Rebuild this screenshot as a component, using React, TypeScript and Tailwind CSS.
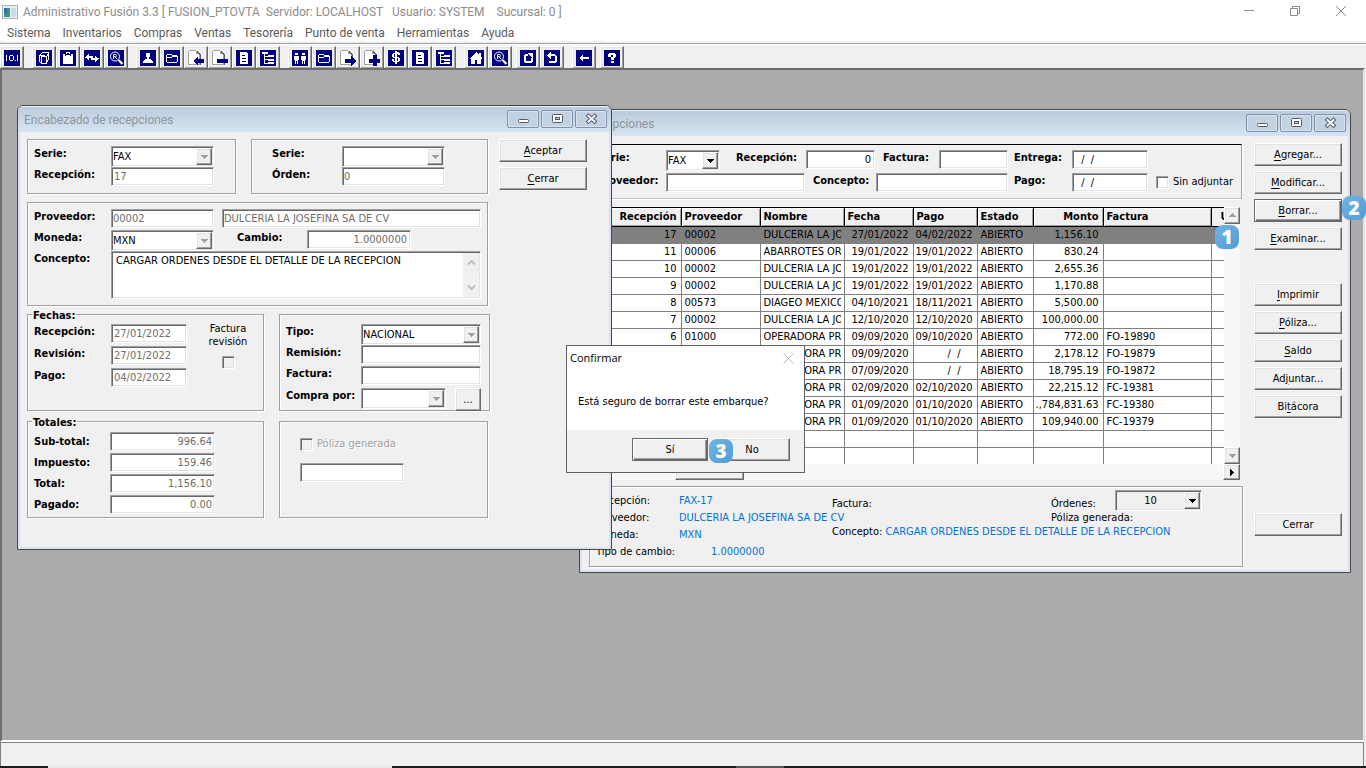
import React from "react";

const sunken =
  "border border-t-[#a0a0a0] border-l-[#a0a0a0] border-r-white border-b-white shadow-[inset_1px_1px_0_#696969,inset_-1px_-1px_0_#e3e3e3]";
const raised =
  "border border-t-white border-l-white border-r-[#696969] border-b-[#696969] shadow-[inset_-1px_-1px_0_#a0a0a0,inset_1px_1px_0_#e3e3e3] bg-[#f0f0f0]";
const etched = "border border-[#a0a0a0] shadow-[1px_1px_0_#fff,inset_1px_1px_0_#fff]";

function Field({
  id,
  value = "",
  className = "",
  label,
  disabled = true,
}: {
  id?: string;
  value?: string;
  className?: string;
  label?: string;
  disabled?: boolean;
}) {
  return (
    <input
      id={id}
      type="text"
      aria-label={label}
      defaultValue={value}
      disabled={disabled}
      className={`block h-[19px] min-w-0 rounded-none bg-white px-[3px] ${sunken} ${
        disabled ? "text-[#6d6d6d]" : "text-black"
      } ${className}`}
    />
  );
}

function Arrow({ dir = "down", color = "#000" }: { dir?: "down" | "up" | "right"; color?: string }) {
  const d = {
    down: "M1 3h7v1H7v1H6v1H5v1H4V6H3V5H2V4H1z",
    up: "M4 2h1v1h1v1h1v1h1v1H1V5h1V4h1V3h1z",
    right: "M3 1h1v1h1v1h1v1h1v1H6v1H5v1H4v1H3z",
  }[dir];
  return (
    <svg width="9" height="9" viewBox="0 0 9 9" shapeRendering="crispEdges" aria-hidden="true">
      <path d={d} fill={color} />
    </svg>
  );
}

function Combo({
  id,
  value = "",
  className = "",
  bg = "bg-white",
  align = "",
  disabled = true,
}: {
  id?: string;
  value?: string;
  className?: string;
  bg?: string;
  align?: string;
  disabled?: boolean;
}) {
  return (
    <div className={`flex h-[21px] items-stretch p-px ${bg} ${sunken} ${className}`}>
      <select
        id={id}
        aria-label={id ? undefined : "Opciones"}
        defaultValue={value}
        disabled={disabled}
        className={`min-w-0 flex-1 appearance-none bg-transparent text-black opacity-100 outline-none ${align}`}
      >
        <option value={value}>{value}</option>
      </select>
      <span className={`pointer-events-none flex w-4 items-center justify-center ${raised}`}>
        <Arrow color={disabled ? "#a0a0a0" : "#000"} />
      </span>
    </div>
  );
}

function Label({
  htmlFor,
  children,
  className = "",
}: {
  htmlFor?: string;
  children: React.ReactNode;
  className?: string;
}) {
  return (
    <label htmlFor={htmlFor} className={`block font-bold whitespace-nowrap ${className}`}>
      {children}
    </label>
  );
}

function PushButton({
  text,
  accel = -1,
  focus = false,
  className = "",
}: {
  text: string;
  accel?: number;
  focus?: boolean;
  className?: string;
}) {
  return (
    <button
      type="button"
      className={`flex h-[23px] items-center justify-center ${
        focus
          ? "border border-[#696969] bg-[#f0f0f0] shadow-[inset_1px_1px_0_#fff,inset_-1px_-1px_0_#696969,inset_-2px_-2px_0_#a0a0a0]"
          : raised
      } ${className}`}
    >
      <span>
        {accel < 0 ? (
          text
        ) : (
          <>
            {text.slice(0, accel)}
            <span className="underline underline-offset-2">{text[accel]}</span>
            {text.slice(accel + 1)}
          </>
        )}
      </span>
    </button>
  );
}

function CaptionButtons() {
  const cls =
    "flex h-[18px] w-8 items-center justify-center rounded-[2px] border border-[#8290ab] bg-[#c3d2e3] shadow-[inset_0_0_0_1px_#d9e4f0]";
  return (
    <div className="flex gap-0.5 pb-0.5">
      <button type="button" aria-label="Minimizar" className={cls}>
        <svg width="13" height="12" viewBox="0 0 13 12">
          <rect x="1.5" y="6.5" width="10" height="3" rx="1" fill="#fff" stroke="#535666" />
        </svg>
      </button>
      <button type="button" aria-label="Maximizar" className={cls}>
        <svg width="13" height="12" viewBox="0 0 13 12">
          <rect x="1.5" y="1.5" width="10" height="8" rx="1" fill="#fff" stroke="#535666" />
          <rect x="4.5" y="4.5" width="4" height="2" fill="#c3d2e3" stroke="#535666" />
        </svg>
      </button>
      <button type="button" aria-label="Cerrar ventana" className={cls}>
        <svg width="13" height="12" viewBox="0 0 13 12">
          <path d="M3.500 3l6 5.500M9.500 3l-6 5.500" stroke="#535666" strokeWidth="4" strokeLinecap="square" />
          <path d="M3.500 3l6 5.500M9.500 3l-6 5.500" stroke="#fff" strokeWidth="2" strokeLinecap="square" />
        </svg>
      </button>
    </div>
  );
}

function Win({
  title,
  className,
  children,
}: {
  title: string;
  className: string;
  children: React.ReactNode;
}) {
  return (
    <section
      aria-label={title}
      className={`absolute flex flex-col overflow-hidden rounded-t-md border border-[#474747] bg-[#d7e3f0] ${className}`}
    >
      <header className="flex h-[26px] items-center justify-between border-t border-[#e8f0f8] bg-linear-to-b from-[#bccbdd] to-[#d7e4f1] pr-1 pl-1.5">
        <h2 className="font-['Roboto',sans-serif] text-[12px] text-[#8f959c]">{title}</h2>
        <CaptionButtons />
      </header>
      <div className="mx-0.5 mb-0.5 flex flex-1 bg-[#f0f0f0] pl-[7px]">{children}</div>
    </section>
  );
}

function Tile({ children }: { children: React.ReactNode }) {
  return (
    <svg width="16" height="16" viewBox="0 0 16 16" shapeRendering="crispEdges" aria-hidden="true">
      <rect width="16" height="16" fill="#000080" />
      {children}
    </svg>
  );
}

const W = "#fff";
function Page({ children }: { children: React.ReactNode }) {
  return (
    <svg width="16" height="16" viewBox="0 0 16 16" shapeRendering="crispEdges" aria-hidden="true">
      <path d="M1 1h8l3 3v11H1z" fill="#fff" />
      <path d="M1 0h7v1H1zM0 1h1v14H0zM8 1h1v2h2v1H8zM11 4h1v11H1v-1h10z" fill="#a0a0a0" />
      <path d="M9 1h1v1h1v1h1v1h1v11h-1V5h-1V4h-1V3H9z" fill="#606060" />
      {children}
    </svg>
  );
}

const icons: Record<string, React.ReactNode> = {
  num: (
    <Tile>
      <path d="M2 5h1v6H2zM6 5h3v1H6zM6 10h3v1H6zM5 6h1v4H5zM9 6h1v4H9zM11 10h1v1h-1zM13 5h1v6h-1z" fill={W} />
    </Tile>
  ),
  cube: (
    <Tile>
      <path d="M3.500 5.500l3-3h6v7l-3 4h-4l-2-2zM3.500 5.500h2l3 0M5.500 13.500v-7h5v7h-5M10.500 6.500l2-3" fill="none" stroke={W} />
    </Tile>
  ),
  clip: (
    <Tile>
      <path d="M3 4h3V2h4v2h3v10H3z" fill={W} />
      <path d="M5 4h6v2H5zM7 3h2v1H7z" fill="#000080" />
      <path d="M6 5h4v1H6z" fill={W} />
    </Tile>
  ),
  swap: (
    <Tile>
      <path d="M1 7h1V6h1V5h1V4h1v2h4v2H5v2H4V9H3V8H1zM15 9h-1v1h-1v1h-1v1h-1v-2H7V8h4V6h1v1h1v1h2z" fill={W} />
    </Tile>
  ),
  find: (
    <Tile>
      <g shapeRendering="auto">
        <circle cx="7" cy="6.500" r="4.500" fill="none" stroke={W} />
        <path d="M5.500 9V4.500h2a1 1 0 010 2.200h-2M7 6.700L9 9" fill="none" stroke={W} />
        <path d="M10.500 10l4 4" stroke={W} strokeWidth="2.200" />
      </g>
    </Tile>
  ),
  user: (
    <Tile>
      <path d="M6 3h4v4H9v2h2v1h1v1h1v2H3v-2h1v-1h1V9h2V7H6z" fill={W} />
    </Tile>
  ),
  folder: (
    <Tile>
      <path d="M2.500 5.500l1-1h4l1 1h4l1 1v5l-1 1h-9l-1-1zM2.500 7.500h5l1-1h5" fill="none" stroke={W} />
    </Tile>
  ),
  pageLeft: (
    <Page>
      <path d="M5 11l5-5v3h6v4h-6v3z" fill="#000080" />
    </Page>
  ),
  pageMinus: (
    <Page>
      <path d="M5 9h11v4H5z" fill="#000080" />
    </Page>
  ),
  pageRight: (
    <Page>
      <path d="M16 11l-5-5v3H5v4h6v3z" fill="#000080" />
    </Page>
  ),
  pagePlus: (
    <Page>
      <path d="M5 9h4V5h4v4h3v4h-3v3H9v-3H5z" fill="#000080" />
    </Page>
  ),
  doc: (
    <Tile>
      <path d="M4 2h6l2 2v10H4z" fill={W} />
      <path d="M6 5h3v1H6zM6 8h4v1H6zM6 11h4v1H6z" fill="#000080" />
    </Tile>
  ),
  tree: (
    <Tile>
      <path d="M2 2h6v2H2zM4 4h1v9h3v1H4zM5 6h3v1H5zM5 9h3v1H5zM8 5h6v2H8zM8 9h6v2H8zM8 12h6v2H8z" fill={W} />
    </Tile>
  ),
  people: (
    <Tile>
      <path d="M3 3h3v2H3zM2 6h5v4H6v4H5v-3H4v3H3v-4H2zM10 3h3v2h-3zM9 6h5v4h-1v4h-1v-3h-1v3h-1v-4H9z" fill={W} />
    </Tile>
  ),
  money: (
    <Tile>
      <path d="M7 1h2v1h2v1h1v2h-2V4H9v3h2v1h1v3h-1v1H9v2H7v-2H5v-1H4V9h2v2h1V8H5V7H4V4h1V3h2zM6 4v3h1V4zM9 8v3h1V8z" fill={W} fillRule="evenodd" />
    </Tile>
  ),
  home: (
    <Tile>
      <path d="M8 2l6 6v1h-1v5H9v-4H7v4H3V9H2V8z" fill={W} />
      <path d="M11 3h2v4h-2z" fill={W} />
    </Tile>
  ),
  redo: (
    <Tile>
      <path d="M5 4h3v2H6v5h5V8h2v4h-1v1H5v-1H4V5h1zM8 3h5v5h-1V7h-1V6h-1V5H9V4H8z" fill={W} />
    </Tile>
  ),
  undo: (
    <Tile>
      <path d="M3 5h1V4h1V3h1V2h1v2h4v1h1v1h1v6h-1v1H5v-2h6V6H7v3H6V8H5V7H4V6H3z" fill={W} />
    </Tile>
  ),
  back: (
    <Tile>
      <path d="M3 8l4-4v3h6v2H7v3z" fill={W} />
    </Tile>
  ),
  help: (
    <Tile>
      <path d="M5 3h6v1h1v3h-1v1h-1v2H7V7h2V5H7v2H4V4h1zM7 11h3v2H7z" fill={W} />
    </Tile>
  ),
};

const toolbar: { gap: string; items: [string, string][] }[] = [
  { gap: "", items: [["num", "Contador"]] },
  { gap: "ml-2", items: [["cube", "Productos"], ["clip", "Portapapeles"], ["swap", "Traspasos"], ["find", "Buscar"]] },
  { gap: "ml-2", items: [["user", "Proveedores"], ["folder", "Carpeta"], ["pageLeft", "Entrada"], ["pageMinus", "Quitar"], ["doc", "Documento"], ["tree", "Árbol"]] },
  { gap: "ml-2", items: [["people", "Clientes"], ["folder", "Carpeta"], ["pageRight", "Salida"], ["pagePlus", "Añadir"], ["money", "Caja"], ["doc", "Documento"], ["tree", "Árbol"]] },
  { gap: "ml-2", items: [["home", "Inicio"], ["find", "Buscar"]] },
  { gap: "ml-1", items: [["redo", "Rehacer"], ["undo", "Deshacer"]] },
  { gap: "ml-2", items: [["back", "Volver"]] },
  { gap: "ml-1", items: [["help", "Ayuda"]] },
];

const menu = ["Sistema", "Inventarios", "Compras", "Ventas", "Tesorería", "Punto de venta", "Herramientas", "Ayuda"];

const rows = [
  ["17", "00002", "DULCERIA LA JOSEFINA", "27/01/2022", "04/02/2022", "ABIERTO", "1,156.10", ""],
  ["11", "00006", "ABARROTES ORIENTE", "19/01/2022", "19/01/2022", "ABIERTO", "830.24", ""],
  ["10", "00002", "DULCERIA LA JOSEFINA", "19/01/2022", "19/01/2022", "ABIERTO", "2,655.36", ""],
  ["9", "00002", "DULCERIA LA JOSEFINA", "19/01/2022", "19/01/2022", "ABIERTO", "1,170.88", ""],
  ["8", "00573", "DIAGEO MEXICO", "04/10/2021", "18/11/2021", "ABIERTO", "5,500.00", ""],
  ["7", "00002", "DULCERIA LA JOSEFINA", "12/10/2020", "12/10/2020", "ABIERTO", "100,000.00", ""],
  ["6", "01000", "OPERADORA PRIMERA", "09/09/2020", "09/10/2020", "ABIERTO", "772.00", "FO-19890"],
  ["5", "01000", "OPERADORA PRIMERA", "09/09/2020", "/  /", "ABIERTO", "2,178.12", "FO-19879"],
  ["4", "01000", "OPERADORA PRIMERA", "07/09/2020", "/  /", "ABIERTO", "18,795.19", "FO-19872"],
  ["3", "01000", "OPERADORA PRIMERA", "02/09/2020", "02/10/2020", "ABIERTO", "22,215.12", "FC-19381"],
  ["2", "01000", "OPERADORA PRIMERA", "01/09/2020", "01/10/2020", "ABIERTO", ".,784,831.63", "FC-19380"],
  ["1", "01000", "OPERADORA PRIMERA", "01/09/2020", "01/10/2020", "ABIERTO", "109,940.00", "FC-19379"],
  ["", "", "", "", "", "", "", ""],
  ["", "", "", "", "", "", "", ""],
];
const heads = ["Recepción", "Proveedor", "Nombre", "Fecha", "Pago", "Estado", "Monto", "Factura"];
const colWidths = ["w-[92px]", "w-[79px]", "w-[84px]", "w-[69px]", "w-[64px]", "w-[56px]", "w-[70px]", "w-[108px]", "w-[13px]"];
const alignOf = (i: number) =>
  i === 0 || i === 3 || i === 4 || i === 6 ? "text-right" : "text-left pl-[3px]";

const check = "block h-[13px] w-[13px] shrink-0 appearance-none rounded-none";
const dither =
  "bg-[repeating-conic-gradient(#fff_0_25%,#f0f0f0_0_50%)] bg-size-[2px_2px]";

function Grid() {
  return (
    <div className="flex h-[273px] w-[651px] flex-col">
      <div className="flex h-[257px]">
        <div className="w-[635px] overflow-hidden border-t border-black">
          <table className="w-full table-fixed border-collapse bg-white">
            <colgroup>
              {colWidths.map((w) => (
                <col key={w} className={w} />
              ))}
            </colgroup>
            <thead>
              <tr className="h-[18px] bg-[#f0f0f0]">
                {heads.map((h, i) => (
                  <th
                    key={h}
                    className={`h-[18px] overflow-hidden border-r border-b border-black p-0 leading-4 font-bold shadow-[inset_1px_1px_0_#fff,inset_-1px_-1px_0_#a0a0a0] ${
                      i === 0 || i === 6 ? "pr-1 text-right" : "pl-[3px] text-left"
                    }`}
                  >
                    {h}
                  </th>
                ))}
                <th className="overflow-hidden border-b border-black p-0 pl-[9px] text-left leading-4 font-bold">U</th>
              </tr>
            </thead>
            <tbody>
              {rows.map((r, k) => (
                <tr key={k} className={k === 0 ? "h-[17px] bg-[#808080]" : "h-[17px]"}>
                  {r.map((c, i) => (
                    <td
                      key={i}
                      className={`h-[17px] overflow-hidden border-r border-b border-[#808080] p-0 leading-4 whitespace-pre ${alignOf(i)} ${
                        c === "/  /" ? "pr-4" : i === 0 || i === 3 || i === 4 || i === 6 ? "pr-1" : ""
                      }`}
                    >
                      {i === 2 ? <span className="block w-[77px] overflow-hidden">{c}</span> : c}
                    </td>
                  ))}
                  <td className="border-b border-[#808080] p-0" />
                </tr>
              ))}
            </tbody>
          </table>
        </div>
        <div className={`flex w-4 flex-col justify-between ${dither}`}>
          <button type="button" aria-label="Subir" className={`flex h-[17px] items-center justify-center ${raised}`}>
            <Arrow dir="up" color="#a0a0a0" />
          </button>
          <button type="button" aria-label="Bajar" className={`flex h-[17px] items-center justify-center ${raised}`}>
            <Arrow color="#a0a0a0" />
          </button>
        </div>
      </div>
      <div className={`flex h-4 justify-between pl-[86px] ${dither}`}>
        <span className={`w-[69px] ${raised}`} />
        <button type="button" aria-label="Desplazar a la derecha" className={`flex w-[17px] items-center justify-center ${raised}`}>
          <Arrow dir="right" />
        </button>
      </div>
    </div>
  );
}

function HeaderWindow() {
  return (
    <Win title="Encabezado de recepciones" className="top-[35px] left-[15px] h-[445px] w-[595px]">
      <div className="flex w-[472px] flex-col pt-[7px]">
        <div className="flex gap-[15px]">
          <div className={`grid h-[55px] w-[209px] grid-cols-[77px_103px] content-start pt-1.5 pl-1.5 ${etched}`}>
            <Label htmlFor="serie">Serie:</Label>
            <Combo id="serie" value="FAX" />
            <Label htmlFor="recep">Recepción:</Label>
            <Field id="recep" value="17" className="pl-0.5" />
          </div>
          <div className={`grid h-[55px] w-[237px] grid-cols-[70px_103px] content-start pt-1.5 pl-5 ${etched}`}>
            <Label htmlFor="serie2">Serie:</Label>
            <Combo id="serie2" />
            <Label htmlFor="orden">Órden:</Label>
            <Field id="orden" value="0" className="pl-px" />
          </div>
        </div>
        <div className={`mt-2 h-[104px] w-[461px] pt-1.5 pl-1.5 ${etched}`}>
          <div className="flex h-[21px]">
            <Label htmlFor="prov" className="w-[77px]">Proveedor:</Label>
            <Field id="prov" value="00002" className="w-[103px] pl-px" />
            <Field label="Nombre del proveedor" value="DULCERIA LA JOSEFINA SA DE CV" className="ml-2 w-[259px] pl-px" />
          </div>
          <div className="flex h-[21px]">
            <Label htmlFor="moneda" className="w-[77px]">Moneda:</Label>
            <Combo id="moneda" value="MXN" className="w-[103px]" />
            <Label htmlFor="cambio" className="ml-[23px] w-[70px]">Cambio:</Label>
            <Field id="cambio" value="1.0000000" className="w-[104px] text-right" />
          </div>
          <div className="flex">
            <Label htmlFor="concepto" className="w-[77px]">Concepto:</Label>
            <div className={`flex h-[48px] w-[370px] bg-white p-px ${sunken}`}>
              <textarea
                id="concepto"
                defaultValue="CARGAR ORDENES DESDE EL DETALLE DE LA RECEPCION"
                className="min-w-0 flex-1 resize-none overflow-hidden bg-transparent pl-[3px] leading-4 outline-none"
              />
              <div className="flex w-4 flex-col items-center justify-between bg-[#f0f0f0] py-1.5" aria-hidden="true">
                <svg width="9" height="7" viewBox="0 0 9 7"><path d="M1 5.500L4.500 2 8 5.500" fill="none" stroke="#bfbfbf" strokeWidth="2" /></svg>
                <svg width="9" height="7" viewBox="0 0 9 7"><path d="M1 1.500L4.500 5 8 1.500" fill="none" stroke="#bfbfbf" strokeWidth="2" /></svg>
              </div>
            </div>
          </div>
        </div>
        <div className="mt-2 flex gap-[15px]">
          <fieldset className={`relative flex h-[97px] w-[237px] pt-[9px] pl-1.5 ${etched}`}>
            <legend className="absolute -top-[7px] left-1 bg-[#f0f0f0] px-px leading-4 font-bold">Fechas:</legend>
            <div className="grid grid-cols-[77px_76px] content-start gap-y-[3px]">
              <Label htmlFor="f1">Recepción:</Label>
              <Field id="f1" value="27/01/2022" className="pl-0.5" />
              <Label htmlFor="f2">Revisión:</Label>
              <Field id="f2" value="27/01/2022" className="pl-0.5" />
              <Label htmlFor="f3">Pago:</Label>
              <Field id="f3" value="04/02/2022" className="pl-0.5" />
            </div>
            <label className="-mt-0.5 ml-4 flex w-[50px] flex-col items-center text-center leading-[13px]">
              Factura revisión
              <input type="checkbox" disabled className={`${check} mt-2 bg-[#f0f0f0] ${sunken}`} />
            </label>
          </fieldset>
          <div className={`grid h-[97px] w-[211px] grid-cols-[75px_120px] content-start pt-[9px] pl-1.5 ${etched}`}>
            <Label htmlFor="tipo">Tipo:</Label>
            <Combo id="tipo" value="NACIONAL" />
            <Label htmlFor="remision">Remisión:</Label>
            <Field id="remision" className="mb-0.5" />
            <Label htmlFor="factura">Factura:</Label>
            <Field id="factura" className="mb-[3px]" />
            <Label htmlFor="compra">Compra por:</Label>
            <div className="flex items-start justify-between">
              <Combo id="compra" className="w-[85px]" />
              <PushButton text="..." className="w-[26px]" />
            </div>
          </div>
        </div>
        <div className="mt-2.5 flex gap-[15px]">
          <fieldset className={`relative h-[97px] w-[237px] pt-2.5 pl-1.5 ${etched}`}>
            <legend className="absolute -top-[7px] left-1 bg-[#f0f0f0] px-px leading-4 font-bold">Totales:</legend>
            <div className="grid grid-cols-[76px_105px] content-start items-center gap-y-0.5">
              <Label htmlFor="t1">Sub-total:</Label>
              <Field id="t1" value="996.64" className="pr-0.5 text-right" />
              <Label htmlFor="t2">Impuesto:</Label>
              <Field id="t2" value="159.46" className="pr-0.5 text-right" />
              <Label htmlFor="t3">Total:</Label>
              <Field id="t3" value="1,156.10" className="pr-0.5 text-right" />
              <Label htmlFor="t4">Pagado:</Label>
              <Field id="t4" value="0.00" className="pr-0.5 text-right" />
            </div>
          </fieldset>
          <div className={`h-[97px] w-[209px] pt-3.5 pl-5 ${etched}`}>
            <label className="flex items-center gap-1 text-[#a0a0a0] [text-shadow:1px_1px_0_#fff]">
              <input type="checkbox" disabled className={`${check} bg-[#f0f0f0] ${sunken}`} />
              Póliza generada
            </label>
            <Field label="Número de póliza" className="mt-[11px] w-[104px]" />
          </div>
        </div>
      </div>
      <div className="flex w-[88px] flex-col gap-[5px] pt-[7px]">
        <PushButton text="Aceptar" accel={0} />
        <PushButton text="Cerrar" accel={0} />
      </div>
    </Win>
  );
}

function ListWindow() {
  return (
    <Win title="Recepciones" className="top-[39px] left-[577px] h-[464px] w-[772px]">
      <div className="flex w-[665px] flex-col pt-2">
        <div className="h-[55px] w-[653px] border border-t-black border-r-[#a0a0a0] border-b-[#c0c0c0] border-l-[#a0a0a0] pt-[5px] pl-[7px] shadow-[1px_1px_0_#fff]">
          <div className="flex h-[23px] items-start">
            <Label htmlFor="q1" className="w-[69px]">Serie:</Label>
            <Combo id="q1" value="FAX" disabled={false} className="w-[54px]" />
            <Label htmlFor="q2" className="ml-4 w-[70px]">Recepción:</Label>
            <Field id="q2" value="0" disabled={false} className="w-[69px] text-right" />
            <Label htmlFor="q3" className="ml-2 w-[56px]">Factura:</Label>
            <Field id="q3" disabled={false} className="w-[69px]" />
            <Label htmlFor="q4" className="ml-1.5 w-[58px]">Entrega:</Label>
            <Field id="q4" value=" /  /" disabled={false} className="w-[76px] pl-[5px]" />
          </div>
          <div className="flex h-[19px] items-start">
            <Label htmlFor="q5" className="w-[69px]">Proveedor:</Label>
            <Field id="q5" disabled={false} className="w-[139px]" />
            <Label htmlFor="q6" className="ml-2 w-[63px]">Concepto:</Label>
            <Field id="q6" disabled={false} className="w-[132px]" />
            <Label htmlFor="q7" className="ml-1.5 w-[58px]">Pago:</Label>
            <Field id="q7" value=" /  /" disabled={false} className="w-[76px] pl-[5px]" />
            <label className="ml-2 flex items-center gap-1 pt-px whitespace-nowrap">
              <input type="checkbox" className={`${check} bg-white ${sunken}`} />
              Sin adjuntar
            </label>
          </div>
        </div>
        <div className="mt-2">
          <Grid />
        </div>
        <div className={`mt-1.5 flex h-[81px] w-[654px] pl-1.5 ${etched}`}>
          <dl className="grid w-[236px] grid-cols-[83px_153px] content-start pt-[5px] leading-[17px] whitespace-nowrap">
            <dt>Recepción:</dt>
            <dd className="text-[#0072d9]">FAX-17</dd>
            <dt>Proveedor:</dt>
            <dd className="text-[#0072d9]">DULCERIA LA JOSEFINA SA DE CV</dd>
            <dt>Moneda:</dt>
            <dd className="text-[#0072d9]">MXN</dd>
            <dt>Tipo de cambio:</dt>
            <dd className="pl-8 text-[#0072d9]">1.0000000</dd>
          </dl>
          <div className="flex-1 pt-2.5 leading-[14px] whitespace-nowrap">
            <div className="flex">
              <p className="w-[219px]">Factura:</p>
              <label htmlFor="ordenes" className="w-16">Órdenes:</label>
              <div className="-mt-[7px] -mb-2">
                <Combo id="ordenes" value="10" disabled={false} bg="bg-[#f0f0f0]" align="text-center" className="w-[87px]" />
              </div>
            </div>
            <p className="pl-[219px]">Póliza generada:</p>
            <p>
              Concepto: <span className="text-[#0072d9]">CARGAR ORDENES DESDE EL DETALLE DE LA RECEPCION</span>
            </p>
          </div>
        </div>
      </div>
      <nav aria-label="Acciones" className="flex w-[88px] flex-col gap-[5px] pt-[7px]">
        <PushButton text="Agregar..." accel={0} />
        <PushButton text="Modificar..." accel={0} />
        <PushButton text="Borrar..." accel={0} focus />
        <PushButton text="Examinar..." accel={0} />
        <PushButton text="Imprimir" accel={0} className="mt-7" />
        <PushButton text="Póliza..." accel={0} />
        <PushButton text="Saldo" accel={0} />
        <PushButton text="Adjuntar..." accel={2} />
        <PushButton text="Bitácora" accel={2} />
        <PushButton text="Cerrar" className="mt-auto mb-[34px]" />
      </nav>
    </Win>
  );
}

function Badge({ n, className }: { n: number; className: string }) {
  return (
    <span
      className={`absolute flex h-6 w-6 items-center justify-center rounded-lg bg-linear-to-br from-[#74b3e3] to-[#4f9cd8] font-['Open_Sans',sans-serif] text-[19px] font-extrabold text-white ${className}`}
    >
      {n}
    </span>
  );
}

export default function App() {
  return (
    <div className="flex h-screen min-h-[600px] flex-col overflow-hidden bg-[#f0f0f0] font-['DejaVu_Sans_Condensed','Noto_Sans',sans-serif] text-[11px] leading-4 text-black">
      <header className="bg-white font-['Roboto',sans-serif] text-[12px]">
        <div className="flex h-6 items-center text-[#8c8c8c]">
          <svg className="ml-0.5" width="16" height="14" viewBox="0 0 16 14" aria-hidden="true">
            <rect x=".5" y=".5" width="15" height="13" fill="#e8eef2" stroke="#a9b3ba" />
            <rect x="2" y="3" width="6" height="9" fill="#3f8f86" />
            <rect x="2" y="3" width="3" height="5" fill="#2f6fa0" />
            <rect x="9" y="3" width="5" height="9" fill="#cfdbe2" />
          </svg>
          <h1 className="ml-[5px] flex-1 whitespace-pre">
            {"Administrativo Fusión 3.3 [ FUSION_PTOVTA  Servidor: LOCALHOST   Usuario: SYSTEM    Sucursal: 0 ]"}
          </h1>
          <div className="flex gap-[34px] pr-[19px] pb-0.5 text-[#8c8c8c]">
            <button type="button" aria-label="Minimizar aplicación">
              <svg width="12" height="12" viewBox="0 0 12 12"><path d="M1 5.500h10" stroke="currentColor" /></svg>
            </button>
            <button type="button" aria-label="Restaurar aplicación">
              <svg width="12" height="12" viewBox="0 0 12 12"><path d="M1.500 3.500h7v7h-7zM3.500 3V1.500h7v7H9" fill="none" stroke="currentColor" /></svg>
            </button>
            <button type="button" aria-label="Cerrar aplicación">
              <svg width="12" height="12" viewBox="0 0 12 12"><path d="M1 1l10 10M11 1L1 11" stroke="currentColor" /></svg>
            </button>
          </div>
        </div>
        <nav aria-label="Menú principal" className="flex h-[17px] items-center gap-3 pl-[7px] text-[#5a5a5a]">
          {menu.map((m) => (
            <button key={m} type="button" className="leading-4 whitespace-nowrap">
              {m}
            </button>
          ))}
        </nav>
      </header>
      <div role="toolbar" aria-label="Herramientas" className="mt-0.5 flex h-[25px] border-t border-[#a0a0a0] pt-0.5 shadow-[inset_0_1px_0_#fff]">
        {toolbar.map((g, i) => (
          <div key={i} className={`flex ${g.gap}`}>
            {g.items.map(([icon, label], k) => (
              <button key={k} type="button" aria-label={label} className={`flex h-[23px] w-6 items-center justify-center ${raised}`}>
                {icons[icon]}
              </button>
            ))}
          </div>
        ))}
      </div>
      <main className="relative mr-px flex-1 border-2 border-t-[#6e6e6e] border-r-[#e3e3e3] border-b-white border-l-[#6e6e6e] bg-[#ababab]">
        <ListWindow />
        <HeaderWindow />
        <div
          role="dialog"
          aria-label="Confirmar"
          className="absolute top-[275px] left-[564px] flex h-[128px] w-[239px] flex-col border border-[#606060] bg-white"
        >
          <div className="flex h-6 items-center justify-between pr-2.5 pl-[3px]">
            <h2 className="font-['Open_Sans',sans-serif] text-[11px]">Confirmar</h2>
            <button type="button" aria-label="Cerrar diálogo">
              <svg width="11" height="11" viewBox="0 0 11 11"><path d="M.5.5l10 10M10.500.5l-10 10" stroke="#bdbdbd" /></svg>
            </button>
          </div>
          <p className="flex flex-1 items-center pt-[3px] pl-[11px]">Está seguro de borrar este embarque?</p>
          <div className="flex h-[42px] gap-1.5 bg-[#f0f0f0] pt-2 pl-[65px]">
            <PushButton text="Sí" focus className="w-[76px]" />
            <PushButton text="No" className="w-[76px]" />
          </div>
        </div>
        <Badge n={1} className="top-[155px] left-[1213px]" />
        <Badge n={2} className="top-[126px] left-[1340px]" />
        <Badge n={3} className="top-[369px] left-[707px]" />
      </main>
      <footer>
        <div className="mr-0.5 h-6 border border-b-0 border-[#808080]" />
        <div className="flex h-0.5 bg-[#1c1a1c]">
          <span className="w-12" />
          <span className="w-[344px] bg-[#e8e8e8]" />
          <span className="w-[344px]" />
          <span className="w-12 bg-[#555]" />
        </div>
      </footer>
    </div>
  );
}
